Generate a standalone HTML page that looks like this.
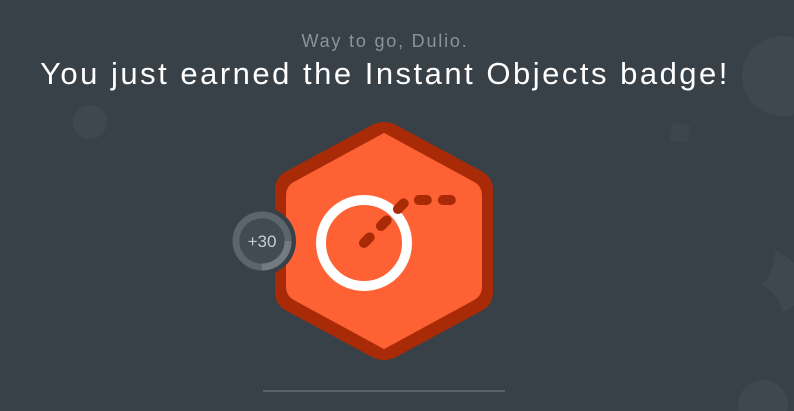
<!DOCTYPE html>
<html><head><style>
html,body{margin:0;padding:0;}
body{width:794px;height:411px;background:#384048;overflow:hidden;position:relative;font-family:"Liberation Sans",sans-serif;}
.sub{position:absolute;top:31px;left:-12px;width:794px;text-align:center;color:#8b929b;font-size:18px;letter-spacing:1.8px;}
.title{position:absolute;top:56px;left:-12px;width:794px;text-align:center;color:#fff;font-size:31px;letter-spacing:2.5px;}
</style></head><body>
<svg width="794" height="411" style="position:absolute;left:0;top:0">
<circle cx="90" cy="122" r="17" fill="#3f474f"/>
<circle cx="782" cy="76" r="40" fill="#3f474f"/>
<rect x="671" y="124" width="18" height="18" fill="#3d454d" transform="rotate(8 680 133)"/>
<path d="M775 250 Q785 255 800 268 L800 300 Q790 310 782 312 Q780 295 760 284 Q774 278 775 250Z" fill="#3f474f"/>
<circle cx="763" cy="405" r="25" fill="#3f474f"/>
<path d="M384 122 Q390 122 396 125 L483 172 Q493 178 493 190 L493 292 Q493 304 483 310 L396 357 Q384 363 372 357 L285 310 Q275 304 275 292 L275 190 Q275 178 285 172 L372 125 Q378 122 384 122Z" fill="#a82a06"/>
<path d="M384 134 L474 183 Q481 187 481 196 L481 286 Q481 295 474 299 L384 348 L294 299 Q287 295 287 286 L287 196 Q287 187 294 183Z" fill="#fe6133" stroke="#fe6133" stroke-width="2" stroke-linejoin="round"/>
<circle cx="364" cy="243" r="43" fill="none" stroke="#fff" stroke-width="10"/>
<path d="M364 243 L400 207 Q406 200 413 200 L452 200" fill="none" stroke="#a82a06" stroke-width="10" stroke-linecap="round" stroke-dasharray="8 16"/>
<circle cx="262" cy="241" r="34" fill="#384048"/>
<circle cx="262" cy="241" r="26" fill="none" stroke="#5c646c" stroke-width="7"/>
<path d="M262 267 A26 26 0 0 0 288 241" fill="none" stroke="#737a82" stroke-width="7"/>
<circle cx="262" cy="241" r="22.5" fill="#424a52"/>
<text x="262" y="247" text-anchor="middle" fill="#c8ccd0" font-family="Liberation Sans" font-size="17">+30</text>
<rect x="263" y="390" width="242" height="2" fill="#5a6168"/>
</svg>
<div class="sub">Way to go, Dulio.</div>
<div class="title">You just earned the Instant Objects badge!</div>
</body></html>
